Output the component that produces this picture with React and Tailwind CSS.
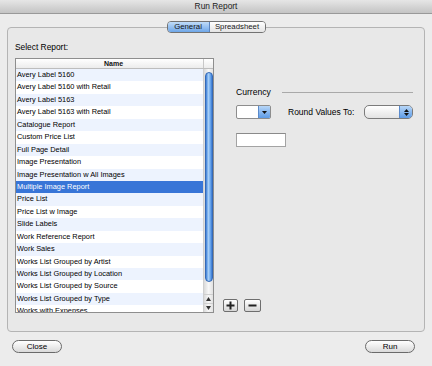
import React from "react";

const reports = [
  "Avery Label 5160",
  "Avery Label 5160 with Retail",
  "Avery Label 5163",
  "Avery Label 5163 with Retail",
  "Catalogue Report",
  "Custom Price List",
  "Full Page Detail",
  "Image Presentation",
  "Image Presentation w All Images",
  "Multiple Image Report",
  "Price List",
  "Price List w Image",
  "Slide Labels",
  "Work Reference Report",
  "Work Sales",
  "Works List Grouped by Artist",
  "Works List Grouped by Location",
  "Works List Grouped by Source",
  "Works List Grouped by Type",
  "Works with Expenses",
];

const SELECTED = 9;

function ReportList() {
  return (
    <div className="w-[199px] h-[255px] border border-[#8e8e8e] bg-white flex flex-col overflow-hidden">
      <div className="h-[10px] flex border-b border-[#bdbdbd] bg-linear-to-b from-white to-[#ececec]">
        <div className="flex-1 text-center font-bold text-[7px] leading-[9px] text-[#111] pl-[8px]">Name</div>
        <div className="w-[10px] border-l border-[#c8c8c8]" />
      </div>
      <div className="flex flex-1 overflow-hidden">
        <div className="flex-1 overflow-hidden">
          {reports.map((name, i) => {
            const selected = i === SELECTED;
            const bg = selected ? "bg-[#3875d7] text-white" : i % 2 === 0 ? "bg-[#edf3fe] text-black" : "bg-white text-black";
            return (
              <div key={name} className={`h-[12.45px] pl-[1px] text-[7.4px] leading-[12.45px] whitespace-nowrap ${bg}`}>
                {name}
              </div>
            );
          })}
        </div>
        <div className="w-[10px] flex flex-col border-l border-[#cfcfcf] bg-[linear-gradient(to_right,#dadada,#f7f7f7_50%,#e2e2e2)]">
          <div className="mt-[3px] mx-auto w-[8px] h-[210px] rounded-full border border-[#3569b5] bg-[linear-gradient(to_right,#3a7dd8,#a9d0f7_40%,#70abef_70%,#3878d2)]" />
          <div className="mt-auto h-[9px] flex items-center justify-center border-t border-[#cfcfcf]">
            <svg width="5" height="4" viewBox="0 0 5 4"><path d="M2.5 0L5 4H0z" fill="#333" /></svg>
          </div>
          <div className="h-[9px] flex items-center justify-center border-t border-[#cfcfcf]">
            <svg width="5" height="4" viewBox="0 0 5 4"><path d="M0 0H5L2.5 4z" fill="#333" /></svg>
          </div>
        </div>
      </div>
    </div>
  );
}

function SmallPopup() {
  return (
    <div className="w-[35px] h-[14px] flex border border-[#8d8d8d] rounded-[2px] bg-white overflow-hidden">
      <div className="flex-1" />
      <div className="w-[12px] flex items-center justify-center border-l border-[#5a8acb] bg-linear-to-b from-[#b7d6f7] to-[#5d9be6]">
        <svg width="5" height="3" viewBox="0 0 5 3"><path d="M0 0H5L2.5 3z" fill="#111" /></svg>
      </div>
    </div>
  );
}

function RoundPopup() {
  return (
    <div className="w-[49px] h-[14px] flex border border-[#7b7b7b] rounded-[5px] bg-linear-to-b from-white to-[#e3e3e3] overflow-hidden">
      <div className="flex-1" />
      <div className="w-[13px] flex flex-col items-center justify-center gap-[1px] border-l border-[#5a8acb] bg-linear-to-b from-[#b7d6f7] to-[#5d9be6]">
        <svg width="5" height="3" viewBox="0 0 5 3"><path d="M2.5 0L5 3H0z" fill="#111" /></svg>
        <svg width="5" height="3" viewBox="0 0 5 3"><path d="M0 0H5L2.5 3z" fill="#111" /></svg>
      </div>
    </div>
  );
}

function SquareButton({ minus }) {
  return (
    <div className={`${minus ? "w-[17px]" : "w-[15px]"} h-[13px] flex items-center justify-center border border-[#6e6e6e] rounded-[2px] bg-linear-to-b from-white to-[#d6d6d6]`}>
      <svg width="9" height="9" viewBox="0 0 9 9">
        <rect x="0.5" y="3.5" width="8" height="2" fill="#222" />
        {!minus && <rect x="3.5" y="0.5" width="2" height="8" fill="#222" />}
      </svg>
    </div>
  );
}

export default function App() {
  return (
    <div className="w-[432px] h-[366px] bg-[#ececec] font-['Liberation_Sans',Arial,sans-serif] text-black flex flex-col">
      <div className="h-[14px] text-center text-[8.4px] leading-[13px] text-[#222] border-b border-[#999] bg-linear-to-b from-[#e6e6e6] to-[#c4c4c4]">
        Run Report
      </div>

      <div className="px-[7px] pt-[13px]">
        <div className="h-[305px] border border-[#b4b4b4] rounded-[4px] bg-[#e8e8e8] flex flex-col">
          <div className="-mt-[7px] mx-auto flex h-[12px] border border-[#727272] rounded-[4px] overflow-hidden text-[7.8px] leading-[10px]">
            <div className="w-[42px] text-center bg-linear-to-b from-[#c0dcf8] to-[#6ea6e8] border-r border-[#5b85bf] text-[#111]">General</div>
            <div className="w-[55px] text-center bg-linear-to-b from-white to-[#e4e4e4] text-[#1a1a1a]">Spreadsheet</div>
          </div>

          <div className="pl-[7px] mt-[9px] text-[8.4px] leading-[10px]">Select Report:</div>

          <div className="pl-[7px] mt-[6px] flex">
            <ReportList />
            <div className="ml-[9px] flex flex-col justify-between pb-[1px]">
              <div className="ml-[13px] mt-[29px] w-[177px]">
                <div className="flex items-center h-[10px]">
                  <span className="text-[8.6px] leading-[10px]">Currency</span>
                  <div className="flex-1 ml-[11px] h-px bg-[#a9a9a9]" />
                </div>
                <div className="mt-[8px] flex items-center">
                  <SmallPopup />
                  <span className="ml-[17px] text-[8.5px] leading-[10px]">Round Values To:</span>
                  <div className="ml-auto">
                    <RoundPopup />
                  </div>
                </div>
                <div className="mt-[14px] w-[50px] h-[14px] border border-[#a3a3a3] border-t-[#8a8a8a] bg-white" />
              </div>
              <div className="flex gap-[6px]">
                <SquareButton />
                <SquareButton minus />
              </div>
            </div>
          </div>
        </div>
      </div>

      <div className="flex justify-between pl-[12px] pr-[17px] mt-[8px]">
        <div className="w-[50px] h-[13px] rounded-full border border-[#6a6a6a] bg-linear-to-b from-white to-[#dadada] text-center text-[8px] leading-[11px]">Close</div>
        <div className="w-[50px] h-[13px] rounded-full border border-[#6a6a6a] bg-linear-to-b from-white to-[#dadada] text-center text-[8px] leading-[11px]">Run</div>
      </div>
    </div>
  );
}
